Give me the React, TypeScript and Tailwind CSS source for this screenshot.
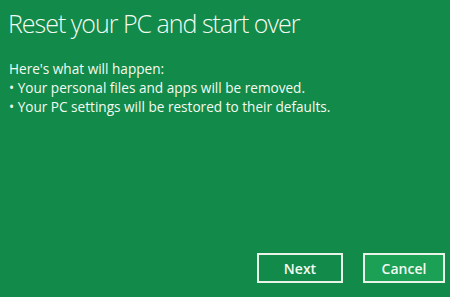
export default function App() {
  return (
    <div className="w-[450px] h-[297px] bg-[#128a49] flex flex-col text-[#f4faf2] overflow-hidden" style={{ fontFamily: '"Open Sans", "Noto Sans", sans-serif' }}>
      <h1 className="pl-[8px] pt-[6px] text-[25px] font-light leading-[34px] tracking-[-1px]">Reset your PC and start over</h1>
      <div className="pl-[9px] pt-[19px] text-[13.6px] leading-[19px]">
        <p>Here's what will happen:</p>
        <p>• Your personal files and apps will be removed.</p>
        <p>• Your PC settings will be restored to their defaults.</p>
      </div>
      <div className="flex-1" />
      <div className="flex justify-end gap-[20px] pr-[5px] pb-[14px]">
        <button className="w-[86px] h-[30px] border-2 border-[#e8f4e8] bg-[#128a49] text-[14px] font-semibold text-[#f4faf2]">Next</button>
        <button className="w-[82px] h-[30px] border-2 border-[#e8f4e8] bg-[#1ba055] text-[14px] font-semibold text-[#f4faf2]">Cancel</button>
      </div>
    </div>
  );
}
